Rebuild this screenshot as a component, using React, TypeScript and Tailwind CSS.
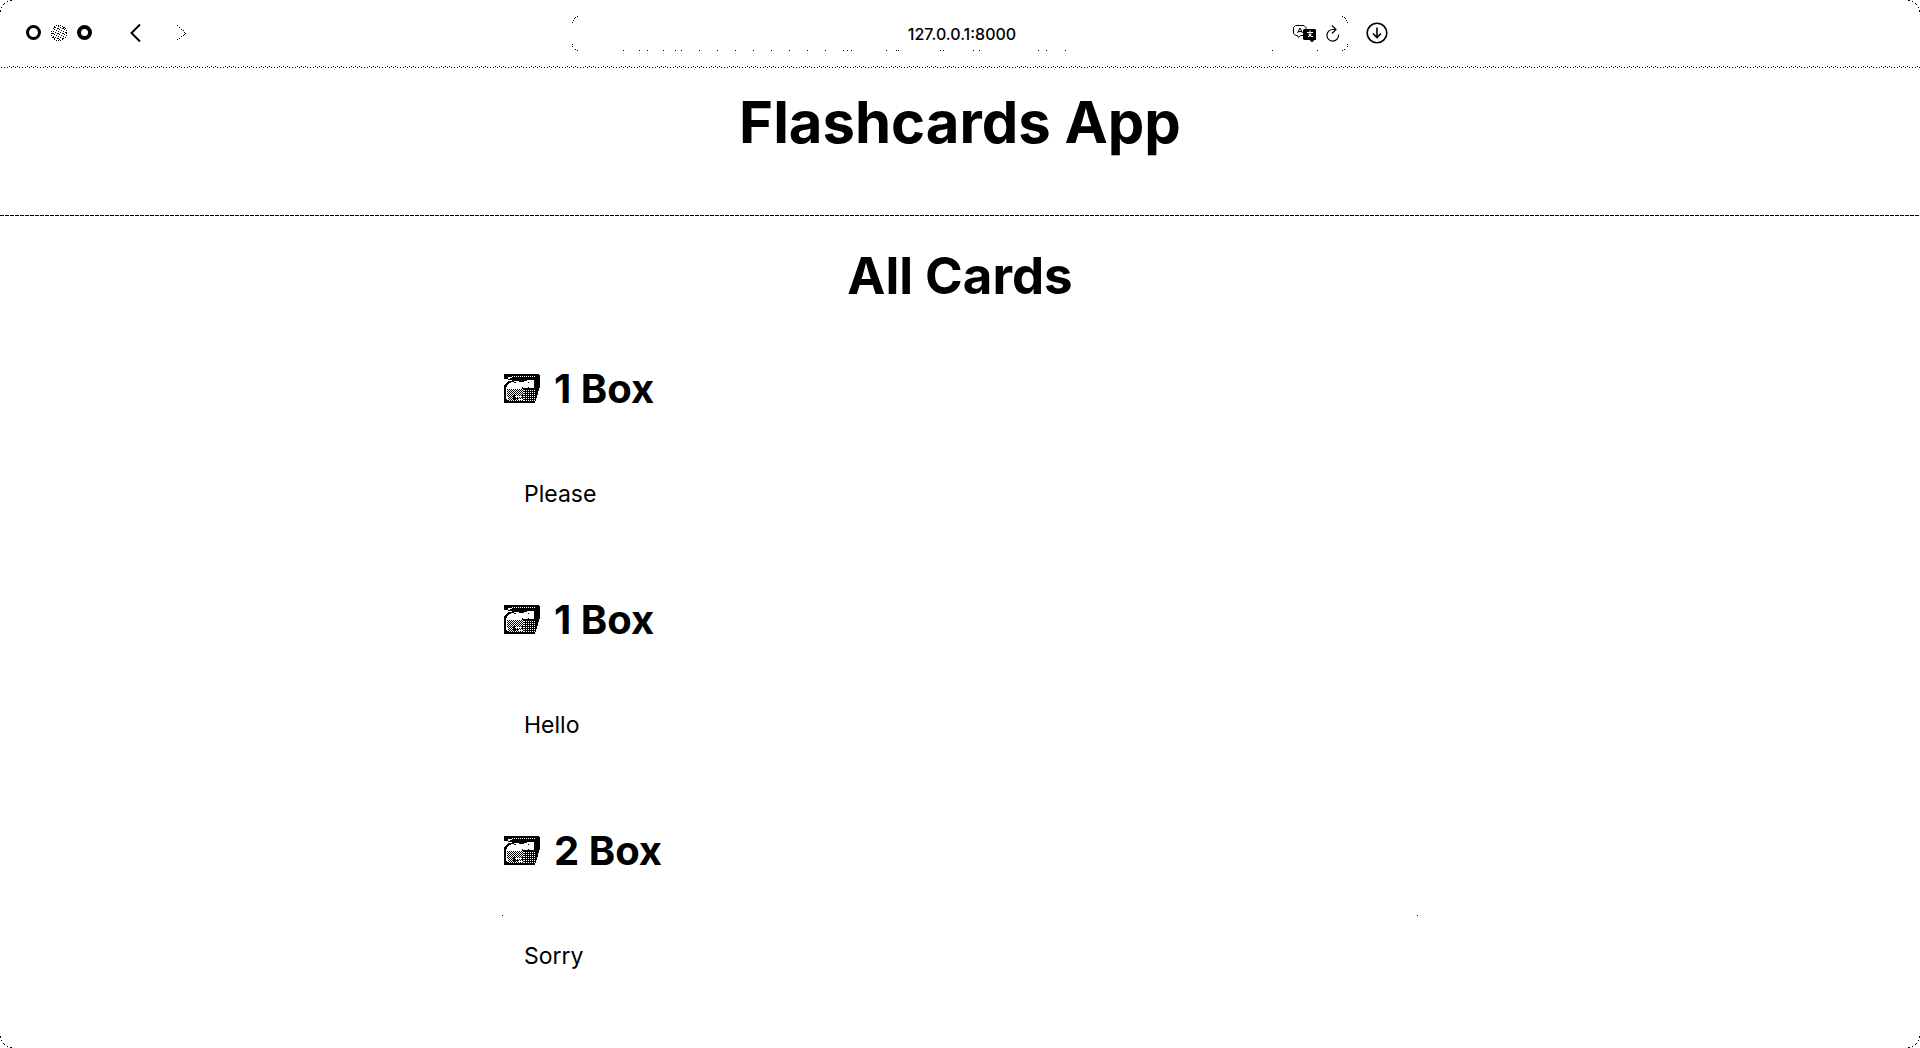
import React from "react";

const cards = [
  { box: 1, question: "Please" },
  { box: 1, question: "Hello" },
  { box: 2, question: "Sorry" },
];

const ticks = [623, 639, 647, 663, 675, 681, 699, 717, 735, 753, 771, 789, 807, 825, 843, 847, 851, 886, 896, 898, 940, 943, 973, 979, 1038, 1046, 1065, 1272, 1317];

function CardBox() {
  return (
    <svg className="h-[30px] w-9 shrink-0" viewBox="0 0 36 30" shapeRendering="crispEdges" aria-hidden="true">
      <defs>
        <pattern id="grain" width="2" height="2" patternUnits="userSpaceOnUse">
          <rect width="1" height="1" fill="#000" />
          <rect x="1" y="1" width="1" height="1" fill="#000" />
        </pattern>
        <pattern id="light" width="2" height="2" patternUnits="userSpaceOnUse">
          <rect width="1" height="1" fill="#fff" />
        </pattern>
      </defs>
      <path d="M0 0H34L36 2V12L34 19L32 26L31 29H0V12L4 7V5H0Z" fill="#000" />
      <path d="M10 1H14V2H32V3H8V2H10Z" fill="url(#light)" />
      <path d="M2 14L4 10L8 8L12 7L18 8L24 6H30V14H22L14 15H2Z" fill="#fff" />
      <path d="M4 3H8V4H6V5H4ZM4 6H8V7H4Z" fill="#fff" />
      <path d="M18 13h1v1h-1zM24 8h1v1h-1zM24 13h1v1h-1zM10 8h2v1h-2z" fill="#000" />
      <path d="M2 15H20V27H4L2 25Z" fill="#fff" />
      <path d="M3 15H20V27H4V22H3Z" fill="url(#grain)" />
      <path d="M20 15H31V27H20Z" fill="url(#light)" />
      <path d="M9 21h2v5h-2zM11 24h3v1h-3zM18 21h1v4h-1z" fill="#000" />
      <path d="M12 22h5v1h-5zM15 25h4v1h-4z" fill="#fff" />
    </svg>
  );
}

function Corner({ className }: { className: string }) {
  return (
    <svg className={className} width="12" height="12" viewBox="0 0 12 12" shapeRendering="crispEdges" aria-hidden="true">
      <path d="M0 10h1v2h-1zM1 7h1v1h-1zM3 4h1v1h-1zM4 3h1v1h-1zM7 1h1v1h-1zM10 0h2v1h-2z" />
    </svg>
  );
}

function BracketEnd({ className }: { className: string }) {
  return (
    <svg className={className} width="6" height="35" viewBox="0 0 6 35" shapeRendering="crispEdges" aria-hidden="true">
      <path d="M5 0h1v1h-1zM3 1h1v1h-1zM2 2h1v1h-1zM1 4h1v1h-1zM0 6h1v1h-1zM0 28h1v1h-1zM0 30h1v1h-1zM3 33h1v1h-1zM5 34h1v1h-1z" />
    </svg>
  );
}

function BrowserBar() {
  return (
    <div className="grid h-[66px] grid-cols-[1fr_776px_1fr] items-center">
      <div className="flex items-center pl-[26px]">
        <div className="flex gap-[10px]">
          <button aria-label="Close" className="size-[15px] rounded-full border-[3px] border-black" />
          <button aria-label="Minimize" className="size-4">
            <svg viewBox="0 0 16 16" className="size-4" shapeRendering="crispEdges" aria-hidden="true">
              <defs>
                <pattern id="dots" width="5" height="5" patternUnits="userSpaceOnUse">
                  <path d="M0 0h1v1h-1zM2 1h1v1h-1zM4 2h1v1h-1zM1 3h1v1h-1zM3 4h1v1h-1zM2 3h1v1h-1z" />
                </pattern>
              </defs>
              <circle cx="8" cy="8" r="7" fill="url(#dots)" />
              <circle cx="8" cy="8" r="7.5" fill="none" stroke="#000" strokeDasharray="1 1" />
            </svg>
          </button>
          <button aria-label="Zoom" className="size-[15px] rounded-full border-4 border-black" />
        </div>
        <button aria-label="Back" className="ml-[38px]">
          <svg width="12" height="18" viewBox="0 0 12 18" fill="none" stroke="#000" strokeWidth="2" aria-hidden="true">
            <path d="M10 0.500L1.500 9L10 17.500" />
          </svg>
        </button>
        <button aria-label="Forward" className="ml-[35px]">
          <svg width="9" height="16" viewBox="0 0 9 16" shapeRendering="crispEdges" aria-hidden="true">
            <path d="M0 0h1v1h-1zM2 2h1v1h-1zM4 4h1v1h-1zM6 5h1v1h-1zM7 7h1v1h-1zM8 8h1v1h-1zM7 9h1v1h-1zM6 10h1v1h-1zM4 11h1v1h-1zM2 13h1v1h-1zM0 14h1v1h-1z" />
          </svg>
        </button>
      </div>
      <div className="relative flex h-[35px] items-center">
        <BracketEnd className="absolute left-0 top-0" />
        <BracketEnd className="absolute right-0 top-0 -scale-x-100" />
        <svg className="absolute bottom-0 left-0 h-px w-full" viewBox="572 0 776 1" shapeRendering="crispEdges" aria-hidden="true">
          {ticks.map((x) => <rect key={x} x={x} width="1" height="1" />)}
        </svg>
        <input aria-label="Address" defaultValue="127.0.0.1:8000" className="w-full bg-transparent pl-1 pt-[2px] text-center text-base font-medium leading-6 outline-none" />
        <div className="absolute right-2 top-[9px] flex gap-[9px]">
          <button aria-label="Translate">
            <svg width="24" height="18" viewBox="0 0 24 18" fill="none" stroke="#000" aria-hidden="true">
              <path d="M10.500 10.500H7.500L5.500 12.500L4.500 10.500H3L0.500 8.500V2.500L2.500 0.500H11L13 2.500V4" />
              <path d="M4.500 8L7 3L9.500 8M5.500 6.500H9" />
              <path d="M10 5L11 4H22L23 5V15H21V16H20V17H18V16H17V15H11L10 14Z" fill="#000" stroke="none" />
              <path d="M14 7.500H20M17 5.500V11M15 11.500H16.500M17.500 11.500H20M15.500 9L18.500 11M18.500 9L15.500 11" stroke="#fff" />
            </svg>
          </button>
          <button aria-label="Reload">
            <svg width="14" height="18" viewBox="0 0 14 18" fill="none" stroke="#000" strokeWidth="1.200" aria-hidden="true">
              <path d="M10 4.500H7A5.800 5.800 0 1 0 12.500 9.500M6 0.500L10 4.500L6 8.500" />
            </svg>
          </button>
        </div>
      </div>
      <div className="flex pl-[18px]">
        <button aria-label="Downloads">
          <svg width="22" height="22" viewBox="0 0 22 22" fill="none" stroke="#000" strokeWidth="1.600" aria-hidden="true">
            <circle cx="11" cy="11" r="9.800" />
            <path d="M11 5.500V15.500M7 11.500L11 15.500L15 11.500" />
          </svg>
        </button>
      </div>
    </div>
  );
}

export default function App() {
  return (
    <div className="relative min-h-screen overflow-hidden bg-white font-['Inter',sans-serif] text-black">
      <Corner className="absolute left-0 top-0" />
      <Corner className="absolute right-0 top-0 -scale-x-100" />
      <Corner className="absolute bottom-0 left-0 -scale-y-100" />
      <Corner className="absolute bottom-0 right-0 -scale-100" />
      <BrowserBar />
      <svg className="block h-[2px] w-full" shapeRendering="crispEdges" aria-hidden="true">
        <defs>
          <pattern id="rule" width="18" height="2" patternUnits="userSpaceOnUse">
            <path d="M1 1h1v1h-1zM4 1h1v1h-1zM7 1h1v1h-1zM9 0h1v1h-1zM11 1h1v1h-1zM13 0h1v1h-1zM15 1h1v1h-1zM17 0h1v1h-1z" />
          </pattern>
        </defs>
        <rect width="100%" height="2" fill="url(#rule)" />
      </svg>
      <header className="pb-[57px] pt-[18px] text-center">
        <h1 className="text-[58px] font-bold leading-[72px]">Flashcards App</h1>
      </header>
      <div className="h-px bg-[repeating-linear-gradient(90deg,#000_0_4px,#fff_4px_5px)]" />
      <main className="mx-auto w-full max-w-[916px]">
        <h2 className="mt-7 text-center text-[51px] font-bold leading-16">All Cards</h2>
        <div className="mt-[55px] flex flex-col gap-[58px]">
          {cards.map((card, i) => (
            <section key={i}>
              <h3 className="flex items-center gap-[14px] pl-[2px] text-[40px] font-bold leading-[52px]">
                <CardBox />
                {card.box} Box
              </h3>
              <article className="relative mt-[38px] px-[22px] pb-6 pt-[23px]">
                {i === 2 && (
                  <>
                    <span className="absolute left-0 top-0 size-px bg-black" />
                    <span className="absolute right-0 top-0 size-px bg-black" />
                  </>
                )}
                <p className="text-[23px] leading-9">{card.question}</p>
              </article>
            </section>
          ))}
        </div>
      </main>
    </div>
  );
}
